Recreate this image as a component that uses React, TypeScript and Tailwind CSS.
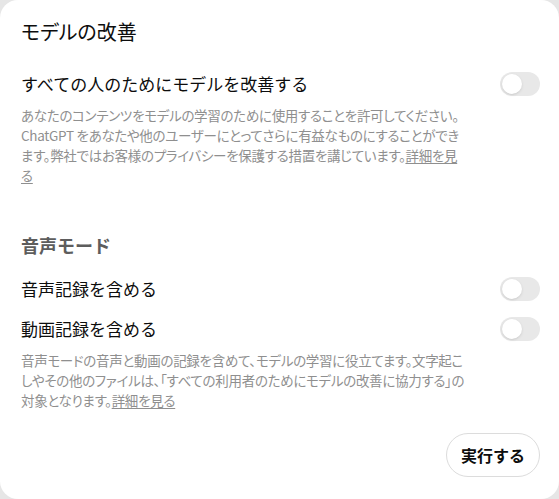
import { useState } from "react";

const jp = "font-['Noto_Sans_CJK_JP','Noto_Sans',sans-serif]";
const palt = "[font-feature-settings:'palt']";

const Toggle = ({ on, onChange }: { on: boolean; onChange: () => void }) => (
  <button
    type="button"
    onClick={onChange}
    className={`relative h-[24px] w-[40px] shrink-0 rounded-full transition-colors ${on ? "bg-[#0d0d0d]" : "bg-[#e8e8e8]"}`}
  >
    <span
      className={`absolute top-[2px] h-[20px] w-[20px] rounded-full bg-white shadow-sm transition-all ${on ? "left-[18px]" : "left-[2px]"}`}
    />
  </button>
);

const Row = ({ label, on, onChange, className = "" }: { label: string; on: boolean; onChange: () => void; className?: string }) => (
  <div className={`flex items-center justify-between ${className}`}>
    <span className="text-[17px] leading-[24px] text-[#0d0d0d]">{label}</span>
    <Toggle on={on} onChange={onChange} />
  </div>
);

export default function App() {
  const [improve, setImprove] = useState(false);
  const [audio, setAudio] = useState(false);
  const [video, setVideo] = useState(false);

  return (
    <div className={`h-[499px] w-[559px] bg-[#e6e6e6] ${jp}`}>
      <div className="flex h-full flex-col rounded-[18px] bg-white pl-[21px] pr-[19px] pt-[18px]">
        <h2 className={`text-[20px] leading-[28px] text-[#0d0d0d] ${palt}`}>モデルの改善</h2>

        <Row
          className="mt-[26px]"
          label="すべての人のためにモデルを改善する"
          on={improve}
          onChange={() => setImprove(!improve)}
        />
        <p className={`mt-[9px] pr-[74px] text-[13.5px] leading-[20px] tracking-[-0.3px] text-[#8f8f8f] ${palt}`}>
          あなたのコンテンツをモデルの学習のために使用することを許可してください。ChatGPT
          をあなたや他のユーザーにとってさらに有益なものにすることができます。弊社ではお客様のプライバシーを保護する措置を講じています。
          <a className="underline underline-offset-2">詳細を見る</a>
        </p>

        <h2 className="mt-[46px] text-[18px] font-bold leading-[28px] text-[#5d5d5d]">音声モード</h2>

        <Row className="mt-[18px]" label="音声記録を含める" on={audio} onChange={() => setAudio(!audio)} />
        <Row className="mt-[16px]" label="動画記録を含める" on={video} onChange={() => setVideo(!video)} />
        <p className={`mt-[9px] pr-[74px] text-[13.5px] leading-[20px] tracking-[-0.3px] text-[#8f8f8f] ${palt}`}>
          音声モードの音声と動画の記録を含めて、モデルの学習に役立てます。文字起こしやその他のファイルは、「すべての利用者のためにモデルの改善に協力する」の対象となります。
          <a className="underline underline-offset-2">詳細を見る</a>
        </p>

        <div className="mt-[23px] flex justify-end">
          <button
            type="button"
            className="h-[44px] w-[94px] rounded-full border border-[#dcdcdc] bg-white text-[16px] font-bold text-[#0d0d0d]"
          >
            実行する
          </button>
        </div>
      </div>
    </div>
  );
}
